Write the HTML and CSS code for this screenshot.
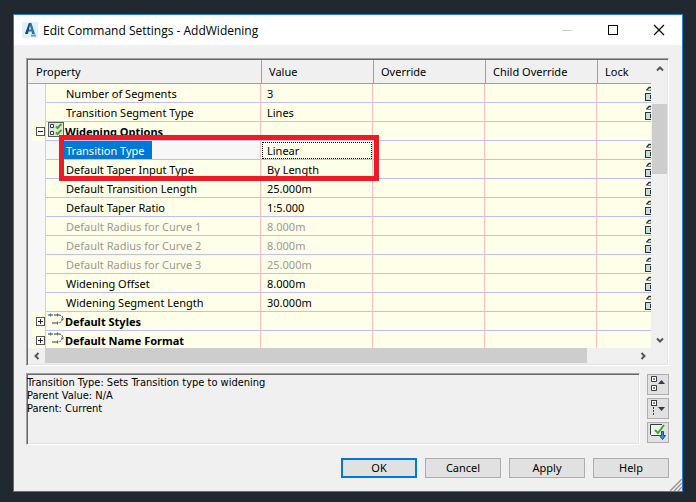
FILE: index.html
```html
<!DOCTYPE html>
<html lang="en">
<head>
    <meta charset="UTF-8">
    <meta name="viewport" content="width=device-width, initial-scale=1.0">
    <title>Edit Command Settings - AddWidening</title>
    <link rel="stylesheet" href="styles.css">
</head>
<body>
    <svg class="symbols" aria-hidden="true">
        <symbol id="lock" viewBox="0 0 12 15">
            <path d="M1.500 4.500 L4 1.500 H7.500 L9 3" fill="none" stroke="#28333c" stroke-width="1.500"/>
            <path d="M3 4.500 H6 V3" fill="none" stroke="#6d8088"/>
            <rect x="0.500" y="7.500" width="10" height="7" fill="#c5dede" stroke="#28333c"/>
            <path d="M5.500 9 V13" stroke="#28333c"/>
        </symbol>
        <symbol id="style-icon" viewBox="0 0 16 14">
            <path d="M0 2.500 H11 M4 10.500 H10" fill="none" stroke="#333b47" stroke-dasharray="5 1"/>
            <path d="M11 2.500 Q15 3 14.500 6 Q14 10 10 10.500" fill="none" stroke="#333b47" stroke-dasharray="2 1"/>
            <path d="M2.500 1 V4 M9.500 1 V4 M9.500 9 V12 M13 6.500 H16" stroke="#1c78c8"/>
        </symbol>
    </svg>

    <main class="dialog">
        <header class="title-bar">
            <svg class="logo" viewBox="0 0 16 16" aria-hidden="true">
                <rect width="16" height="16" fill="#e4f0f8"/>
                <path d="M3 12 L7 1 H9.500 L13 12 H10 L9.500 9.500 H6 L5 12 Z" fill="#2a7ba6"/>
                <path d="M3 12 L7 1 H8 L6 12 Z" fill="#174f73"/>
                <path d="M7 7.500 H9 L8 4 Z" fill="#e4f0f8"/>
                <path d="M9 13.500 H14" stroke="#58a5cf" stroke-width="2"/>
            </svg>
            <h1>Edit Command Settings - AddWidening</h1>
            <button class="window-btn" aria-label="Minimize" disabled>
                <svg viewBox="0 0 12 12"><path d="M1 6.500 H11" stroke="#c8c8c8"/></svg>
            </button>
            <button class="window-btn" aria-label="Maximize">
                <svg viewBox="0 0 12 12"><rect x="1.500" y="1.500" width="9" height="9" fill="none" stroke="#000"/></svg>
            </button>
            <button class="window-btn" aria-label="Close">
                <svg viewBox="0 0 12 12"><path d="M1 1 L11 11 M11 1 L1 11" stroke="#000" stroke-width="1.200"/></svg>
            </button>
        </header>

        <div class="content">
            <div class="grid-frame sunken">
                <div class="grid-row">
                    <div class="grid-view">
                        <table>
                            <colgroup>
                                <col class="col-tree">
                                <col class="col-property">
                                <col class="col-value">
                                <col class="col-value">
                                <col class="col-value">
                                <col>
                            </colgroup>
                            <thead>
                                <tr>
                                    <th colspan="2">Property</th>
                                    <th>Value</th>
                                    <th>Override</th>
                                    <th>Child Override</th>
                                    <th>Lock</th>
                                </tr>
                            </thead>
                            <tbody>
                                <tr><td></td><td>Number of Segments</td><td>3</td><td></td><td></td><td><svg class="lock"><use href="#lock"/></svg></td></tr>
                                <tr><td></td><td>Transition Segment Type</td><td>Lines</td><td></td><td></td><td><svg class="lock"><use href="#lock"/></svg></td></tr>
                                <tr class="group">
                                    <td><button class="expander" aria-label="Collapse Widening Options"><svg viewBox="0 0 9 9"><path d="M2 4.500 H7" stroke="#222"/></svg></button></td>
                                    <td>
                                        <div class="group-name">
                                            <svg class="group-icon" viewBox="0 0 16 15">
                                                <rect x="0.500" y="0.500" width="15" height="14" fill="#e4e4e4" stroke="#555c66"/>
                                                <path d="M2.500 2.500 H5.500 V5.500 H2.500 Z M2.500 9.500 H5.500 V12.500 H2.500 Z" fill="#fff" stroke="#333b47"/>
                                                <path d="M8 4.500 L9.500 6 L13.500 2 M8 10.500 L9.500 12 L13.500 8" fill="none" stroke="#43ac12" stroke-width="2"/>
                                            </svg>
                                            Widening Options
                                        </div>
                                    </td>
                                    <td></td><td></td><td></td><td></td>
                                </tr>
                                <tr class="selected"><td></td><td><span class="highlight">Transition Type</span></td><td>Linear</td><td></td><td></td><td><svg class="lock"><use href="#lock"/></svg></td></tr>
                                <tr><td></td><td>Default Taper Input Type</td><td>By Length</td><td></td><td></td><td><svg class="lock"><use href="#lock"/></svg></td></tr>
                                <tr><td></td><td>Default Transition Length</td><td>25.000m</td><td></td><td></td><td><svg class="lock"><use href="#lock"/></svg></td></tr>
                                <tr><td></td><td>Default Taper Ratio</td><td>1:5.000</td><td></td><td></td><td><svg class="lock"><use href="#lock"/></svg></td></tr>
                                <tr class="disabled"><td></td><td>Default Radius for Curve 1</td><td>8.000m</td><td></td><td></td><td><svg class="lock"><use href="#lock"/></svg></td></tr>
                                <tr class="disabled"><td></td><td>Default Radius for Curve 2</td><td>8.000m</td><td></td><td></td><td><svg class="lock"><use href="#lock"/></svg></td></tr>
                                <tr class="disabled"><td></td><td>Default Radius for Curve 3</td><td>25.000m</td><td></td><td></td><td><svg class="lock"><use href="#lock"/></svg></td></tr>
                                <tr><td></td><td>Widening Offset</td><td>8.000m</td><td></td><td></td><td><svg class="lock"><use href="#lock"/></svg></td></tr>
                                <tr><td></td><td>Widening Segment Length</td><td>30.000m</td><td></td><td></td><td><svg class="lock"><use href="#lock"/></svg></td></tr>
                                <tr class="group">
                                    <td><button class="expander" aria-label="Expand Default Styles"><svg viewBox="0 0 9 9"><path d="M2 4.500 H7 M4.500 2 V7" stroke="#222"/></svg></button></td>
                                    <td><div class="group-name"><svg class="group-icon"><use href="#style-icon"/></svg>Default Styles</div></td>
                                    <td></td><td></td><td></td><td></td>
                                </tr>
                                <tr class="group">
                                    <td><button class="expander" aria-label="Expand Default Name Format"><svg viewBox="0 0 9 9"><path d="M2 4.500 H7 M4.500 2 V7" stroke="#222"/></svg></button></td>
                                    <td><div class="group-name"><svg class="group-icon"><use href="#style-icon"/></svg>Default Name Format</div></td>
                                    <td></td><td></td><td></td><td></td>
                                </tr>
                            </tbody>
                        </table>
                        <div class="callout"></div>
                    </div>
                    <div class="scroll-v">
                        <button class="arrow" aria-label="Scroll up"><svg viewBox="0 0 8 8"><path d="M1 5.500 L4 2.500 L7 5.500" fill="none" stroke="#555" stroke-width="2"/></svg></button>
                        <div class="thumb"></div>
                        <button class="arrow" aria-label="Scroll down"><svg viewBox="0 0 8 8"><path d="M1 2.500 L4 5.500 L7 2.500" fill="none" stroke="#555" stroke-width="2"/></svg></button>
                    </div>
                </div>
                <div class="scroll-h">
                    <button class="arrow" aria-label="Scroll left"><svg viewBox="0 0 8 8"><path d="M5.500 1 L2.500 4 L5.500 7" fill="none" stroke="#555" stroke-width="2"/></svg></button>
                    <div class="thumb"></div>
                    <button class="arrow" aria-label="Scroll right"><svg viewBox="0 0 8 8"><path d="M2.500 1 L5.500 4 L2.500 7" fill="none" stroke="#555" stroke-width="2"/></svg></button>
                </div>
            </div>

            <div class="details">
                <div class="description sunken">
                    <p>Transition Type: Sets Transition type to widening</p>
                    <p>Parent Value: N/A</p>
                    <p>Parent: Current</p>
                </div>
                <div class="tools">
                    <button class="tool-btn" aria-label="Collapse all">
                        <svg viewBox="0 0 20 19">
                            <path d="M3.500 1.500 H8.500 V6.500 H3.500 Z M3.500 10.500 H8.500 V15.500 H3.500 Z" fill="#fff" stroke="#333b47"/>
                            <path d="M5 3 H7 V5 H5 Z M5 12 H7 V14 H5 Z" fill="#888"/>
                            <path d="M10 9 L13.500 5 L17 9 Z" fill="#333b47"/>
                        </svg>
                    </button>
                    <button class="tool-btn" aria-label="Expand all">
                        <svg viewBox="0 0 20 19">
                            <rect x="3.500" y="1.500" width="5" height="5" fill="#fff" stroke="#333b47"/>
                            <path d="M5 3 H7 V5 H5 Z" fill="#888"/>
                            <path d="M5.500 8 V17" stroke="#333b47" stroke-dasharray="2 1"/>
                            <path d="M10 8 L13.500 12 L17 8 Z" fill="#333b47"/>
                        </svg>
                    </button>
                    <button class="tool-btn" aria-label="Apply to all">
                        <svg viewBox="0 0 20 19">
                            <path d="M11 12.500 H3.500 L2.500 11.500 V1.500 H14" fill="#eef3f8" stroke="#333b47"/>
                            <path d="M7 7 L10 10 L16 2" fill="none" stroke="#43ac12" stroke-width="2"/>
                            <path d="M13.500 8.500 H15.500 V12.500 H17.500 L14.500 16.500 L11.500 12.500 H13.500 Z" fill="#2a90e8" stroke="#124f92"/>
                        </svg>
                    </button>
                </div>
            </div>

            <footer class="actions">
                <button class="btn btn-default">OK</button>
                <button class="btn">Cancel</button>
                <button class="btn">Apply</button>
                <button class="btn">Help</button>
            </footer>
        </div>

        <svg class="grip" viewBox="0 0 12 12" aria-hidden="true">
            <path d="M0 12 L12 0 M4 12 L12 4 M8 12 L12 8" stroke="#999" stroke-width="1.500"/>
        </svg>
    </main>
</body>
</html>
```
FILE: styles.css
```css
* {
    box-sizing: border-box;
}
body {
    display: flex;
    min-height: 100vh;
    margin: 0;
    padding: 14px 13px 10px;
    background-color: #212830;
    color: #000;
    font-family: "Noto Sans", "Open Sans", sans-serif;
    font-size: 11px;
}
button {
    font: inherit;
    color: inherit;
    padding: 0;
}
svg {
    display: block;
}
.symbols {
    position: absolute;
    width: 0;
    height: 0;
}
.dialog {
    position: relative;
    flex: 1;
    min-width: 0;
    background-color: #f0f0f0;
    border: 1px solid #1883d7;
}

/* Title bar */
.title-bar {
    display: flex;
    align-items: center;
    height: 30px;
    padding-left: 8px;
    background-color: #fff;
}
.logo {
    width: 16px;
    height: 16px;
    margin-right: 5px;
}
.title-bar h1 {
    flex: 1;
    margin: 0;
    font-family: "Open Sans", "Noto Sans", sans-serif;
    font-size: 12px;
    font-weight: normal;
}
.window-btn {
    display: flex;
    align-items: center;
    justify-content: center;
    width: 46px;
    height: 28px;
    background: none;
    border: none;
}
.window-btn svg {
    width: 12px;
    height: 12px;
}

/* Property grid */
.content {
    padding: 13px 13px 12px 12px;
}
.sunken {
    border: 1px solid;
    border-color: #a0a0a0 #fff #fff #a0a0a0;
    box-shadow: inset 1px 1px 0 #696969, inset -1px -1px 0 #e3e3e3;
}
.grid-frame {
    padding: 1px 1px 2px;
}
.grid-row {
    display: flex;
}
.grid-view {
    position: relative;
    flex: 1;
    min-width: 0;
    height: 288px;
    overflow: hidden;
}
table {
    width: 100%;
    table-layout: fixed;
    border-collapse: separate;
    border-spacing: 0;
}
.col-tree {
    width: 18px;
}
.col-property {
    width: 215px;
}
.col-value {
    width: 112px;
}
th {
    height: 24px;
    padding: 0 7px;
    border-left: 1px solid #a0a0a0;
    border-bottom: 1px solid #a0a0a0;
    font-weight: normal;
    text-align: left;
}
th:first-child {
    border-left-color: transparent;
}
td {
    height: 19px;
    padding: 1px 6px 0;
    background-color: #ffffe9;
    border-right: 1px solid #ffbebe;
    border-bottom: 1px solid #bebeff;
    line-height: 17px;
    white-space: nowrap;
    overflow: hidden;
}
td:first-child {
    padding: 0;
    background-color: #f7f7f7;
    border-bottom: none;
}
td:nth-child(2) {
    padding-left: 20px;
}
td:last-child {
    padding: 0;
    border-right: none;
}
.lock {
    width: 12px;
    height: 15px;
    margin-left: auto;
    margin-right: -6px;
}
.disabled td {
    color: #999;
}
.group td {
    font-weight: bold;
}
.group td:first-child {
    background: linear-gradient(to right, #f7f7f7 4px, #ffffe9 4px);
}
.group td:nth-child(2) {
    padding-top: 0;
    padding-left: 2px;
}
.group-name {
    display: flex;
    align-items: flex-start;
    gap: 1px;
    height: 18px;
    line-height: 20px;
}
.group-icon {
    width: 16px;
    height: 15px;
}
.expander {
    display: block;
    width: 9px;
    height: 9px;
    margin-left: 8px;
    background: #fff;
    border: 1px solid #555;
}
.expander svg {
    width: 9px;
    height: 9px;
    margin: -1px;
}
.selected td:nth-child(2) {
    padding-top: 0;
    padding-left: 16px;
    background-color: #f7f7f7;
}
.selected td:nth-child(3) {
    outline: 1px dotted #000;
    outline-offset: -2px;
}
.highlight {
    display: block;
    width: 90px;
    padding: 1px 0 0 4px;
    background-color: #0078d7;
    color: #fff;
}
.callout {
    position: absolute;
    top: 75px;
    left: 31px;
    width: 320px;
    height: 46px;
    border: 5px solid #ed1c24;
}

/* Scroll bars */
.scroll-v {
    display: flex;
    flex-direction: column;
    width: 16px;
    padding-left: 1px;
}
.scroll-v .thumb {
    flex: 0 0 70px;
    margin: 27px 0 auto;
}
.scroll-h {
    display: flex;
    height: 15px;
    margin-right: 16px;
}
.scroll-h .thumb {
    width: 87%;
    margin-right: auto;
}
.thumb {
    background-color: #cdcdcd;
}
.arrow {
    display: flex;
    align-items: center;
    justify-content: center;
    flex: 0 0 17px;
    background: none;
    border: none;
}
.arrow svg {
    width: 8px;
    height: 8px;
}

/* Description and tools */
.details {
    display: flex;
    gap: 7px;
    margin-top: 7px;
}
.description {
    flex: 1;
    height: 72px;
    padding-top: 2px;
    font-family: "DejaVu Sans Condensed", "DejaVu Sans", sans-serif;
    line-height: 13px;
}
.description p {
    margin: 0;
}
.tools {
    display: flex;
    flex-direction: column;
    gap: 3px;
    padding-top: 1px;
}
.tool-btn {
    width: 22px;
    height: 21px;
    background-color: #e1e1e1;
    border: 1px solid #adadad;
}
.tool-btn svg {
    width: 20px;
    height: 19px;
}
.actions {
    display: flex;
    justify-content: flex-end;
    gap: 8px;
    margin-top: 13px;
}
.btn {
    width: 76px;
    height: 20px;
    background-color: #e1e1e1;
    border: 1px solid #adadad;
    line-height: 18px;
}
.btn-default {
    border: 2px solid #0078d7;
    line-height: 16px;
}
.grip {
    position: absolute;
    right: 0;
    bottom: 0;
    width: 12px;
    height: 12px;
}
```
